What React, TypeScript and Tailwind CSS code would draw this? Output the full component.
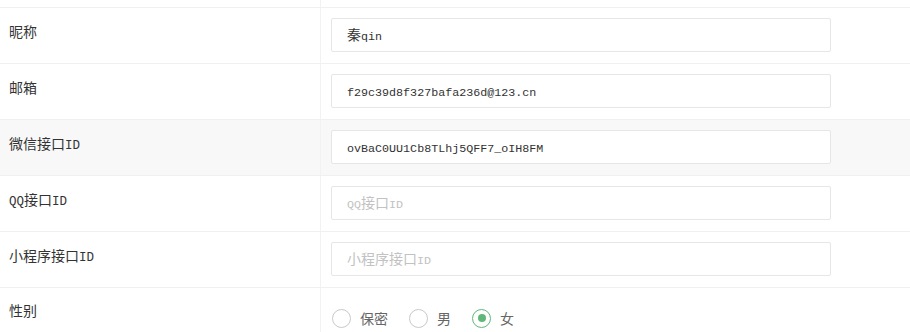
import React from "react";

const CJK = /([\u3000-\u9fff\uff00-\uffef]+)/;

function Mixed({ text, latin }: { text: string; latin: string }) {
  const parts = text.split(CJK).filter((p) => p.length > 0);
  return (
    <>
      {parts.map((p, i) =>
        CJK.test(p) ? (
          <span key={i} className="font-['Noto_Sans_CJK_SC',sans-serif] text-[14px]">
            {p}
          </span>
        ) : (
          <span key={i} className={latin}>
            {p}
          </span>
        )
      )}
    </>
  );
}

const latinCls = "font-['Liberation_Mono','DejaVu_Sans_Mono',monospace] text-[11.7px]";
const labelLatinCls = "font-['Liberation_Mono','DejaVu_Sans_Mono',monospace] text-[12.5px]";

function Row({
  label,
  value,
  placeholder,
  shaded,
}: {
  label: string;
  value?: string;
  placeholder?: string;
  shaded?: boolean;
}) {
  return (
    <div className={`flex h-[56px] border-b border-[#f0f0f0] ${shaded ? "bg-[#f8f8f8]" : "bg-white"}`}>
      <div className="w-[321px] shrink-0 border-r border-[#f2f2f2] pl-[9px] pt-[13px] leading-[20px] text-[#333]">
        <Mixed text={label} latin={labelLatinCls} />
      </div>
      <div className="flex-1 pl-[10px] pt-[10px]">
        <div className="flex h-[34px] w-[500px] items-center rounded-[2px] border border-[#e6e6e6] bg-white pl-[15px] leading-[20px]">
          {value ? (
            <span className="text-[#333]">
              <Mixed text={value} latin={latinCls} />
            </span>
          ) : (
            <span className="text-[#c2c2c2]">
              <Mixed text={placeholder || ""} latin={latinCls} />
            </span>
          )}
        </div>
      </div>
    </div>
  );
}

function Radio({ label, checked }: { label: string; checked?: boolean }) {
  return (
    <div className="flex items-center">
      <div
        className={`flex h-[19px] w-[19px] items-center justify-center rounded-full border-[1.5px] ${
          checked ? "border-[#5FB878]" : "border-[#c9c9c9]"
        }`}
      >
        {checked && <div className="h-[8px] w-[8px] rounded-full bg-[#5FB878]" />}
      </div>
      <span className="ml-[9px] font-['Noto_Sans_CJK_SC',sans-serif] text-[14px] leading-[20px] text-[#666]">
        {label}
      </span>
    </div>
  );
}

export default function App() {
  return (
    <div className="w-[910px] h-[332px] overflow-hidden bg-white font-['Noto_Sans_CJK_SC',sans-serif] text-[14px]">
      <div className="flex h-[8px] border-b border-[#f0f0f0]">
        <div className="w-[321px] shrink-0 border-r border-[#f2f2f2]" />
        <div className="flex-1" />
      </div>
      <Row label="昵称" value="秦qin" />
      <Row label="邮箱" value="f29c39d8f327bafa236d@123.cn" />
      <Row label="微信接口ID" value="ovBaC0UU1Cb8TLhj5QFF7_oIH8FM" shaded />
      <Row label="QQ接口ID" placeholder="QQ接口ID" />
      <Row label="小程序接口ID" placeholder="小程序接口ID" />
      <div className="flex h-[56px]">
        <div className="w-[321px] shrink-0 border-r border-[#f2f2f2] pl-[9px] pt-[12px] leading-[20px] text-[#333]">
          性别
        </div>
        <div className="flex flex-1 items-start gap-[21px] pl-[11px] pt-[20px]">
          <Radio label="保密" />
          <Radio label="男" />
          <Radio label="女" checked />
        </div>
      </div>
    </div>
  );
}
